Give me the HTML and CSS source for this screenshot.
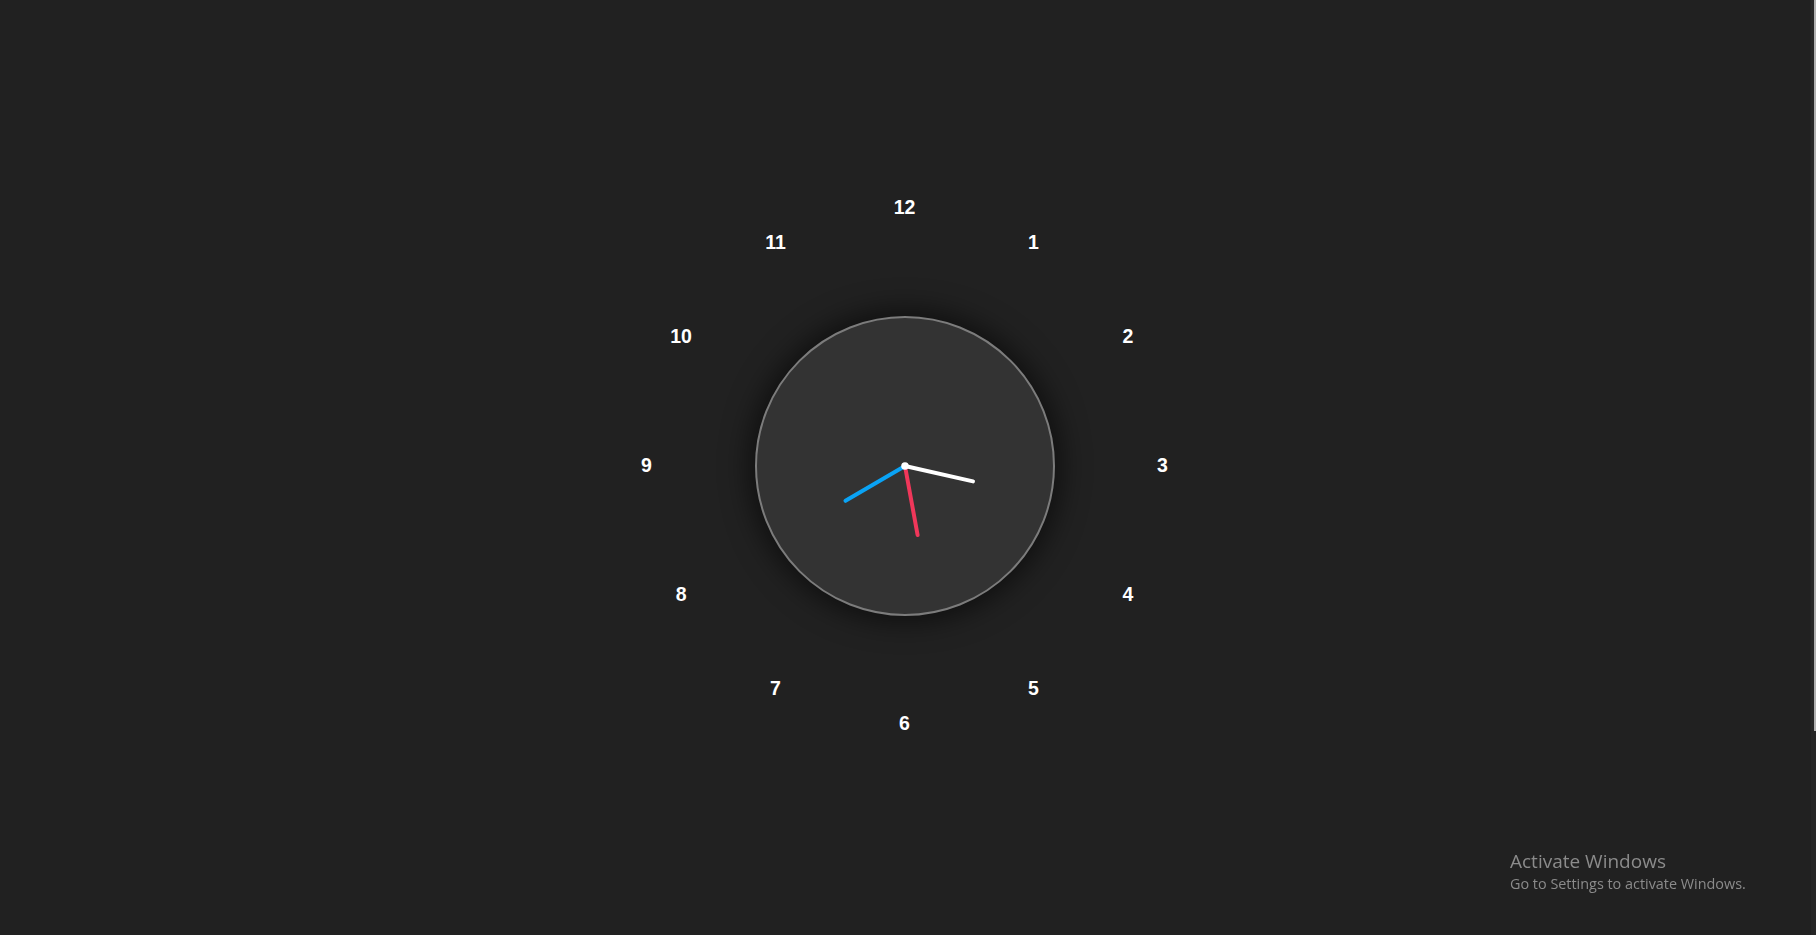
FILE: index.html
```html
<!DOCTYPE html>
<html lang="en">
<head>
<meta charset="utf-8">
<title>Clock</title>
<link rel="stylesheet" href="styles.css">
</head>
<body>
<main class="stage">
  <div class="clock">
    <div class="dial">
      <span class="num" style="left:129px;top:-223.4px">1</span>
      <span class="num" style="left:223.4px;top:-129px">2</span>
      <span class="num" style="left:258px;top:0px">3</span>
      <span class="num" style="left:223.4px;top:129px">4</span>
      <span class="num" style="left:129px;top:223.4px">5</span>
      <span class="num" style="left:0px;top:258px">6</span>
      <span class="num" style="left:-129px;top:223.4px">7</span>
      <span class="num" style="left:-223.4px;top:129px">8</span>
      <span class="num" style="left:-258px;top:0px">9</span>
      <span class="num" style="left:-223.4px;top:-129px">10</span>
      <span class="num" style="left:-129px;top:-223.4px">11</span>
      <span class="num" style="left:0px;top:-258px">12</span>
    </div>
    <svg class="hands" viewBox="-150 -150 300 300" width="300" height="300">
      <line class="hand hand-blue" x1="0" y1="0" x2="-59.5" y2="34.8"/>
      <line class="hand hand-white" x1="0" y1="0" x2="68" y2="15.4"/>
      <line class="hand hand-red" x1="0" y1="0" x2="12.6" y2="69"/>
      <circle class="pin" cx="0" cy="0" r="3.8"/>
    </svg>
  </div>
</main>
<div class="scrollbar"><div class="thumb"></div></div>
<div class="activate">
  <div class="act-title">Activate Windows</div>
  <div class="act-sub">Go to Settings to activate Windows.</div>
</div>
</body>
</html>
```
FILE: styles.css
```css
html, body {
  margin: 0;
  padding: 0;
  height: 100%;
  overflow: hidden;
}
body {
  background: #212121;
  font-family: "Liberation Sans", Arial, sans-serif;
}
.stage {
  height: 100vh;
  display: flex;
  align-items: center;
  justify-content: center;
  padding-right: 7px;
  box-sizing: border-box;
}
.clock {
  position: relative;
  width: 300px;
  height: 300px;
  margin-top: -3px;
  border-radius: 50%;
  background: #333333;
  border: 2px solid #7c7c7c;
  box-sizing: border-box;
  box-shadow: 0 0 28px 6px rgba(0, 0, 0, 0.55);
}
.dial {
  position: absolute;
  left: 50%;
  top: 50%;
  width: 0;
  height: 0;
}
.num {
  position: absolute;
  transform: translate(-50%, -50%);
  margin-top: 0;
  color: #ffffff;
  font-weight: bold;
  font-size: 19.5px;
  line-height: 1;
  white-space: nowrap;
}
.hands {
  position: absolute;
  left: -2px;
  top: -2px;
  overflow: visible;
}
.hand {
  stroke-width: 4;
  stroke-linecap: round;
}
.hand-blue { stroke: #0aa3f5; }
.hand-white { stroke: #ffffff; }
.hand-red { stroke: #f0375a; }
.pin { fill: #ffffff; }
.scrollbar {
  position: fixed;
  right: 0;
  top: 0;
  width: 5px;
  height: 100%;
  background: #262626;
}
.thumb {
  position: absolute;
  right: 0;
  top: 0;
  width: 2px;
  height: 731px;
  background: #b0b0b0;
}
.activate {
  position: fixed;
  left: 1510px;
  top: 849px;
  color: #8b8b8b;
  font-family: "Open Sans", "Noto Sans", sans-serif;
}
.act-title {
  font-size: 19px;
  line-height: 25px;
}
.act-sub {
  font-size: 14.4px;
  line-height: 19px;
}
```
